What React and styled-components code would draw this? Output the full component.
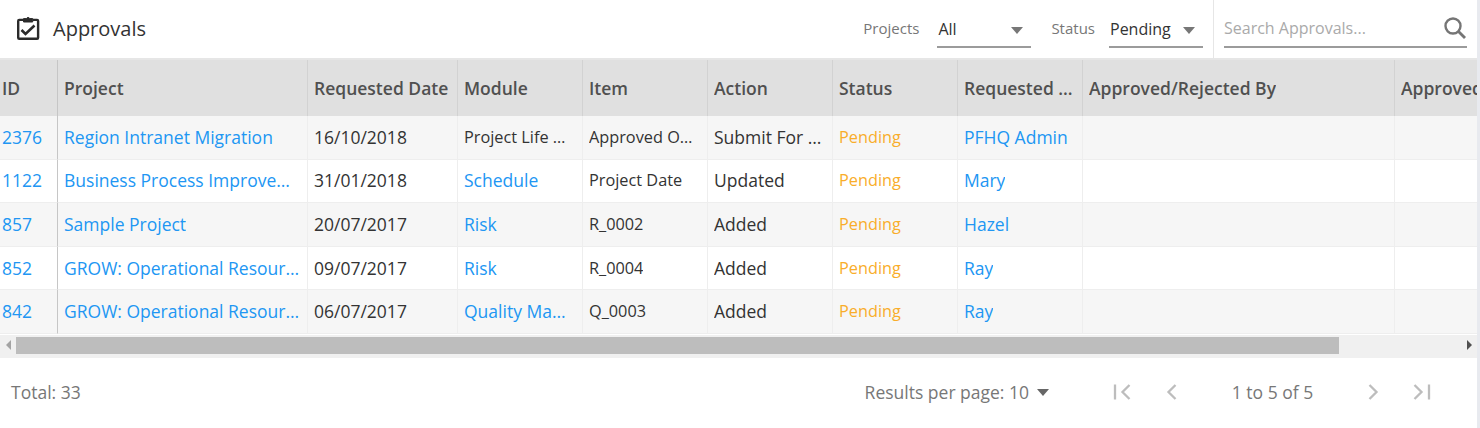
import React from 'react'
import styled, { createGlobalStyle } from 'styled-components'

const columns = [
  { label: 'ID', width: 58, strong: true },
  { label: 'Project', width: 250 },
  { label: 'Requested Date', width: 150 },
  { label: 'Module', width: 125 },
  { label: 'Item', width: 125 },
  { label: 'Action', width: 125 },
  { label: 'Status', width: 125 },
  { label: 'Requested By', width: 125 },
  { label: 'Approved/Rejected By', width: 312 },
  { label: 'Approved Date', width: 150 },
]

const rows = [
  { id: '2376', project: 'Region Intranet Migration', date: '16/10/2018', module: 'Project Life Cycle', moduleLink: false, item: 'Approved Order', action: 'Submit For Approval', by: 'PFHQ Admin' },
  { id: '1122', project: 'Business Process Improvement', date: '31/01/2018', module: 'Schedule', moduleLink: true, item: 'Project Date', action: 'Updated', by: 'Mary' },
  { id: '857', project: 'Sample Project', date: '20/07/2017', module: 'Risk', moduleLink: true, item: 'R_0002', action: 'Added', by: 'Hazel' },
  { id: '852', project: 'GROW: Operational Resource Plan', date: '09/07/2017', module: 'Risk', moduleLink: true, item: 'R_0004', action: 'Added', by: 'Ray' },
  { id: '842', project: 'GROW: Operational Resource Plan', date: '06/07/2017', module: 'Quality Management', moduleLink: true, item: 'Q_0003', action: 'Added', by: 'Ray' },
]

const Global = createGlobalStyle`
  html, body {
    margin: 0;
    background: #fff;
  }
  body {
    font-family: "Open Sans", "Noto Sans", sans-serif;
  }
`

const Page = styled.div`
  width: 1480px;
  height: 428px;
  box-sizing: border-box;
  border-right: 3px solid #e8eaef;
  overflow: hidden;
  display: flex;
  flex-direction: column;
`

const Toolbar = styled.div`
  height: 58px;
  display: flex;
  align-items: center;
  border-bottom: 2px solid #e6e6e6;
`

const Title = styled.div`
  display: flex;
  align-items: center;
  gap: 13px;
  margin-left: 16px;
  padding-bottom: 2px;
  font-size: 20px;
  color: #333;
  flex: 1;
`

const FilterLabel = styled.span`
  font-size: 15px;
  color: #777;
  margin-right: ${(p) => p.$gap}px;
  padding-bottom: 2px;
`

const Select = styled.div`
  width: ${(p) => p.$width}px;
  height: 36px;
  margin-right: ${(p) => p.$after}px;
  margin-top: 2px;
  box-sizing: border-box;
  display: flex;
  align-items: center;
  justify-content: space-between;
  padding: 0 8px 0 1px;
  border-bottom: 2px solid #9b9b9b;
  font-size: 16px;
  color: #333;
`

const Caret = styled.span`
  display: inline-block;
  width: 0;
  height: 0;
  margin-top: 2px;
  border-left: 6.5px solid transparent;
  border-right: 6.5px solid transparent;
  border-top: 7px solid ${(p) => p.$color || '#777'};
`

const SearchBox = styled.div`
  align-self: stretch;
  width: 264px;
  padding: 0 10px 10px 10px;
  box-sizing: border-box;
  border-left: 1px solid #e6e6e6;
  display: flex;
  align-items: flex-end;
`

const SearchInner = styled.div`
  flex: 1;
  height: 36px;
  box-sizing: border-box;
  display: flex;
  align-items: center;
  justify-content: space-between;
  padding-bottom: 3px;
  border-bottom: 2px solid #9b9b9b;
  font-size: 16px;
  color: #aaa;
`

const TableWrap = styled.div`
  overflow: hidden;
`

const Table = styled.div`
  display: grid;
  width: max-content;
  grid-template-columns: ${columns.map((c) => `${c.width}px`).join(' ')};
`

const HeadCell = styled.div`
  height: 56px;
  box-sizing: border-box;
  display: flex;
  align-items: center;
  padding: 0 6px;
  padding-left: ${(p) => (p.$first ? 2 : 6)}px;
  background: #e0e0e0;
  border-right: 1px solid ${(p) => (p.$strong ? '#c6c6c6' : '#d2d2d2')};
  font-size: 17.5px;
  font-weight: 600;
  color: #505050;
  white-space: nowrap;
  overflow: hidden;

  span {
    overflow: hidden;
    text-overflow: ellipsis;
  }
`

const Cell = styled.div`
  height: 43.6px;
  box-sizing: border-box;
  display: flex;
  align-items: center;
  padding: 0 ${(p) => p.$right || 6}px 1px ${(p) => (p.$first ? 2 : 6)}px;
  background: ${(p) => (p.$odd ? '#f6f6f6' : '#fff')};
  border-right: 1px solid ${(p) => (p.$strong ? '#c6c6c6' : '#eee')};
  border-bottom: 1px solid #eee;
  font-size: ${(p) => (p.$small ? 16.3 : 17.5)}px;
  color: #333;
  white-space: nowrap;
  overflow: hidden;

  span {
    overflow: hidden;
    text-overflow: ellipsis;
  }
`

const Link = styled.span`
  color: #2196f3;
`

const Pending = styled.span`
  color: #f9ad2a;
  font-size: 16.3px;
`

const ScrollBar = styled.div`
  height: 24px;
  background: #f0f0f0;
  display: flex;
  align-items: flex-start;
  padding-top: 2px;
  box-sizing: border-box;
  border-top: 1px solid #fff;
`

const ScrollArrow = styled.div`
  width: 16px;
  height: 17px;
  display: flex;
  align-items: center;
  justify-content: center;
`

const ArrowShape = styled.span`
  width: 0;
  height: 0;
  border-top: 5px solid transparent;
  border-bottom: 5px solid transparent;
  ${(p) => (p.$right ? `border-left: 5px solid #505050;` : `border-right: 5px solid #a3a3a3;`)}
`

const ScrollTrack = styled.div`
  flex: 1;
  height: 17px;
`

const ScrollThumb = styled.div`
  width: 1323px;
  height: 17px;
  background: #bdbdbd;
`

const Footer = styled.div`
  flex: 1;
  display: flex;
  align-items: center;
  font-size: 17.5px;
  color: #777;
  padding: 0 45px 2px 11px;
`

const Total = styled.div`
  flex: 1;
`

const PerPage = styled.div`
  display: flex;
  align-items: center;
  gap: 8px;
  margin-right: 63px;
`

const PagerIcon = styled.svg`
  width: 20px;
  height: 20px;
  fill: none;
  stroke: #bdbdbd;
  stroke-width: 2.3;
  margin-left: ${(p) => p.$gap || 0}px;
`

const PageText = styled.div`
  width: 181px;
  text-align: center;
`

function TitleIcon() {
  return (
    <svg width="24" height="26" viewBox="0 0 24 26" fill="none" stroke="#2b2b2b" strokeWidth="2.4">
      <path d="M7 4.9H3.2a1 1 0 0 0-1 1v16.9a1 1 0 0 0 1 1h17.9a1 1 0 0 0 1-1V5.9a1 1 0 0 0-1-1H17" />
      <path d="M7.5 7V3.6h3a1.7 1.7 0 0 1 3.2 0h3V7z" fill="#2b2b2b" strokeWidth="1" />
      <path d="M5.5 15l4 4 9-8.5" strokeWidth="2.6" />
    </svg>
  )
}

function SearchIcon() {
  return (
    <svg width="24" height="24" viewBox="0 0 24 24" fill="none" stroke="#757575" strokeWidth="2.4">
      <circle cx="10" cy="10" r="7.5" />
      <path d="M15.5 15.5l6.5 6.5" strokeWidth="2.8" />
    </svg>
  )
}

function App() {
  return (
    <Page>
      <Global />
      <Toolbar>
        <Title>
          <TitleIcon />
          Approvals
        </Title>
        <FilterLabel $gap={18}>Projects</FilterLabel>
        <Select $width={94} $after={20}>
          All
          <Caret />
        </Select>
        <FilterLabel $gap={14}>Status</FilterLabel>
        <Select $width={94} $after={10}>
          Pending
          <Caret />
        </Select>
        <SearchBox>
          <SearchInner>
            Search Approvals...
            <SearchIcon />
          </SearchInner>
        </SearchBox>
      </Toolbar>
      <TableWrap>
        <Table>
          {columns.map((c, i) => (
            <HeadCell key={c.label} $first={i === 0} $strong={c.strong}>
              <span>{c.label}</span>
            </HeadCell>
          ))}
          {rows.map((r, i) => {
            const base = { $odd: i % 2 === 0 }
            return (
              <React.Fragment key={r.id}>
                <Cell {...base} $first $strong><Link>{r.id}</Link></Cell>
                <Cell {...base}><Link>{r.project}</Link></Cell>
                <Cell {...base}><span>{r.date}</span></Cell>
                <Cell {...base} $right={7} $small={!r.moduleLink}>
                  {r.moduleLink ? <Link>{r.module}</Link> : <span>{r.module}</span>}
                </Cell>
                <Cell {...base} $right={10} $small><span>{r.item}</span></Cell>
                <Cell {...base}><span>{r.action}</span></Cell>
                <Cell {...base}><Pending>Pending</Pending></Cell>
                <Cell {...base}><Link>{r.by}</Link></Cell>
                <Cell {...base} />
                <Cell {...base} />
              </React.Fragment>
            )
          })}
        </Table>
      </TableWrap>
      <ScrollBar>
        <ScrollArrow><ArrowShape /></ScrollArrow>
        <ScrollTrack><ScrollThumb /></ScrollTrack>
        <ScrollArrow><ArrowShape $right /></ScrollArrow>
      </ScrollBar>
      <Footer>
        <Total>Total: 33</Total>
        <PerPage>
          Results per page: 10
          <Caret $color="#666" />
        </PerPage>
        <PagerIcon viewBox="0 0 20 20"><path d="M3 2.5v15M17.5 3l-7 7 7 7" /></PagerIcon>
        <PagerIcon viewBox="0 0 20 20" $gap={30}><path d="M13.5 3l-7 7 7 7" /></PagerIcon>
        <PageText>1 to 5 of 5</PageText>
        <PagerIcon viewBox="0 0 20 20"><path d="M6.5 3l7 7-7 7" /></PagerIcon>
        <PagerIcon viewBox="0 0 20 20" $gap={29}><path d="M2.5 3l7 7-7 7M17 2.5v15" /></PagerIcon>
      </Footer>
    </Page>
  )
}

export default App
